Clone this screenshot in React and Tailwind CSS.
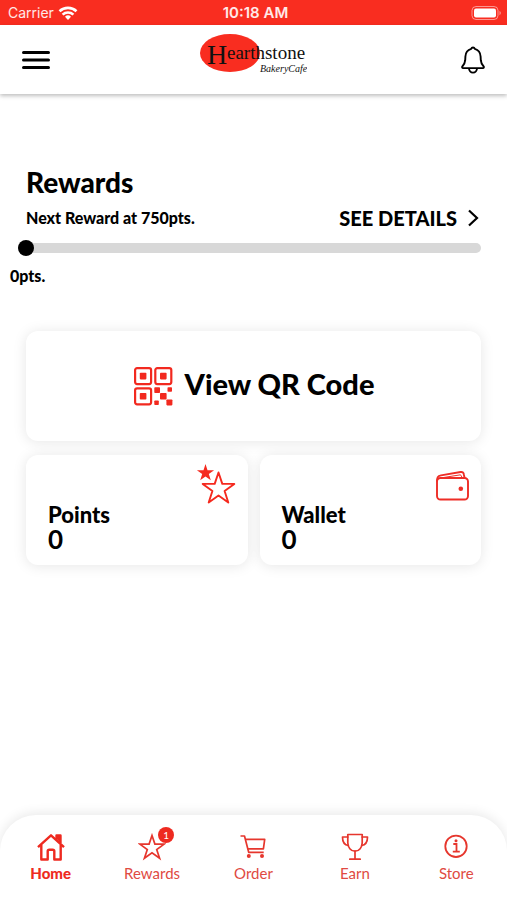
import React, { useState } from 'react';
import clsx from 'clsx';

const WifiIcon = () => (
  <svg className="w-5 h-4" viewBox="0 0 20 16" fill="none" stroke="#fff" strokeWidth="2.6" aria-hidden="true">
    <path d="M1.5 6.2a12.5 12.5 0 0 1 17 0" />
    <path d="M4.6 9.6a8 8 0 0 1 10.8 0" />
    <path d="M10 15l-3-3.2a4.3 4.3 0 0 1 6 0z" fill="#fff" stroke="none" />
  </svg>
);

const BatteryIcon = () => (
  <svg className="w-8 h-4" viewBox="0 0 32 16" fill="none" aria-hidden="true">
    <rect x="1" y="1.5" width="26" height="13" rx="4" stroke="#fff" strokeOpacity="0.5" />
    <rect x="3" y="3.5" width="22" height="9" rx="2" fill="#fff" />
    <path d="M28.5 6v4.2a2.3 2.3 0 0 0 0-4.2z" fill="#fff" fillOpacity="0.5" />
  </svg>
);

const MenuIcon = () => (
  <svg className="w-7 h-5" viewBox="0 0 28 20" fill="none" stroke="#000" strokeWidth="3" strokeLinecap="round" aria-hidden="true">
    <path d="M1.5 2.5h25M1.5 10h25M1.5 17.500h25" />
  </svg>
);

const BellIcon = () => (
  <svg className="w-6 h-7" viewBox="0 0 24 28" fill="none" stroke="#000" strokeWidth="1.9" strokeLinejoin="round" aria-hidden="true">
    <path d="M10.2 2.800a1.900 1.900 0 0 1 3.600 0C17.600 3.800 19.400 6.800 19.600 10.500l.2 3.700c.2 2.500.8 4.200 2.700 6 .7.700.4 1.900-.7 1.900H2.200c-1.100 0-1.400-1.200-.7-1.900 1.900-1.800 2.500-3.500 2.700-6l.2-3.700C4.600 6.800 6.400 3.800 10.200 2.800z" />
    <path d="M8 22.300a4 4.300 0 0 0 8 0" />
  </svg>
);

const Logo = () => (
  <svg className="w-27 h-12" viewBox="0 0 108 48" role="img" aria-label="Hearthstone Bakery Cafe">
    <ellipse cx="31" cy="19" rx="30" ry="19" fill="#f92d20" />
    <g fill="#111" fontFamily="'Liberation Serif', serif">
      <text x="8" y="30" fontSize="28">H</text>
      <text x="28" y="25" fontSize="19">earthstone</text>
      <text x="61" y="38" fontSize="10" fontStyle="italic">BakeryCafe</text>
    </g>
  </svg>
);

const QrIcon = () => (
  <svg className="w-10 h-10" viewBox="0 0 40 40" fill="none" stroke="#f2291f" strokeWidth="2.2" aria-hidden="true">
    <rect x="2.1" y="2.1" width="16" height="16" rx="2" />
    <rect x="22.3" y="2.1" width="16" height="16" rx="2" />
    <rect x="2.1" y="22.3" width="16" height="16" rx="2" />
    <g fill="#f2291f" stroke="none">
      <rect x="6.8" y="6.8" width="6.6" height="6.6" rx="0.8" />
      <rect x="27" y="6.8" width="6.6" height="6.6" rx="0.8" />
      <rect x="6.8" y="27" width="6.6" height="6.6" rx="0.8" />
      <rect x="27" y="27" width="6.6" height="6.6" rx="0.8" />
      <rect x="21.3" y="21.3" width="5.7" height="5.7" rx="0.8" />
      <rect x="34.5" y="21.3" width="4.5" height="4.5" rx="0.8" />
      <rect x="21.3" y="34.5" width="4.5" height="4.5" rx="0.8" />
      <rect x="33.4" y="33.4" width="6" height="6" rx="0.8" />
    </g>
  </svg>
);

const StarsIcon = () => (
  <svg className="w-10 h-11" viewBox="0 0 40 44" fill="none" aria-hidden="true">
    <path d="M9.500 1l2 6.200h6.600l-5.300 3.900 2 6.200-5.300-3.800-5.300 3.800 2-6.200L.9 7.200h6.600z" fill="#f5291e" />
    <path d="M22.500 9.500l3.800 11.400h12l-9.700 7.100 3.700 11.500-9.800-7-9.800 7L16.400 28l-9.700-7.100h12z" stroke="#f5291e" strokeWidth="1.900" strokeLinejoin="round" />
  </svg>
);

const WalletIcon = () => (
  <svg className="w-10 h-11" viewBox="0 0 40 44" fill="none" stroke="#ee2d26" strokeWidth="1.9" strokeLinejoin="round" aria-hidden="true">
    <rect x="8" y="15" width="31" height="21.5" rx="3.5" />
    <path d="M8 18.500c0-4 .6-5.500 4-6.100L31.500 9c2-.3 3 .5 3.300 2.200l.8 3.800" />
    <path d="M11.500 15l20-3.200 2 3.200" strokeWidth="1" />
    <circle cx="31.800" cy="25.800" r="2.300" fill="#ee2d26" stroke="none" />
  </svg>
);

const HomeIcon = () => (
  <svg className="w-7 h-7" viewBox="0 0 28 28" fill="none" stroke="#ee2a20" strokeWidth="2.4" strokeLinejoin="round" aria-hidden="true">
    <path d="M1 14.200L14 2.300l13 11.900" />
    <path d="M19.500 6V2.500h4V10" fill="#ee2a20" />
    <path d="M4.300 12v14.500h6.400v-8.200c0-1 .6-1.600 1.600-1.600h3.400c1 0 1.600.6 1.600 1.600v8.200h6.400V12" />
  </svg>
);

const StarIcon = () => (
  <svg className="w-7 h-7" viewBox="0 0 28 28" fill="none" stroke="#e6362d" strokeWidth="1.7" aria-hidden="true">
    <path d="M14 2.500l2.900 8.600h9.300l-7.500 5.400 2.900 8.800-7.600-5.400-7.600 5.400 2.900-8.800-7.500-5.400h9.300z" />
  </svg>
);

const CartIcon = () => (
  <svg className="w-7 h-7" viewBox="0 0 28 28" fill="none" stroke="#e6362d" strokeWidth="1.7" strokeLinejoin="round" aria-hidden="true">
    <path d="M1.500 3h4L9.700 19.300h15" />
    <path d="M6.300 6.300h19.400L24.400 15.800H8.800" />
    <circle cx="9.800" cy="23" r="2" fill="#e6362d" stroke="none" />
    <circle cx="23" cy="23" r="2" fill="#e6362d" stroke="none" />
  </svg>
);

const TrophyIcon = () => (
  <svg className="w-7 h-7" viewBox="0 0 28 28" fill="none" stroke="#e6362d" strokeWidth="1.7" strokeLinecap="round" strokeLinejoin="round" aria-hidden="true">
    <path d="M6.800 1.500h14.400v8.300c0 4.600-3 8.400-7.200 8.400s-7.200-3.800-7.200-8.400z" />
    <path d="M6.800 4H1.500c0 5 1.700 8 5.900 8.500M21.200 4h5.300c0 5-1.700 8-5.900 8.500" />
    <path d="M14 18.200v8M8.800 26.200h10.400" />
  </svg>
);

const InfoIcon = () => (
  <svg className="w-7 h-7" viewBox="0 0 28 28" fill="none" stroke="#e6362d" strokeWidth="1.8" aria-hidden="true">
    <circle cx="14" cy="13.300" r="10.700" />
    <path d="M11.300 11h3.200v7.600M10.800 18.600h7" />
    <circle cx="14" cy="7.700" r="1.500" fill="#e6362d" stroke="none" />
  </svg>
);

const tabs = [
  { id: 'home', label: 'Home', Icon: HomeIcon },
  { id: 'rewards', label: 'Rewards', Icon: StarIcon, badge: 1 },
  { id: 'order', label: 'Order', Icon: CartIcon },
  { id: 'earn', label: 'Earn', Icon: TrophyIcon },
  { id: 'store', label: 'Store', Icon: InfoIcon }
];

const StatCard = ({ label, value, icon }) => (
  <button className="flex items-start justify-between h-[110px] rounded-xl bg-white pl-[22px] pr-3 text-left shadow-[0_1px_14px_rgba(0,0,0,0.1)]">
    <span className="flex flex-col pt-12">
      <span className="text-[22px] leading-6 font-black">{label}</span>
      <span className="text-[26px] leading-6 font-bold">{value}</span>
    </span>
    <span className="pt-2">{icon}</span>
  </button>
);

const BottomNav = ({ activeTab, onTabChange }) => (
  <nav className="grid grid-cols-5 h-[85px] rounded-t-[36px] bg-white pt-4 shadow-[0_-2px_12px_rgba(0,0,0,0.09)]">
    {tabs.map(({ id, label, Icon, badge }) => (
      <button key={id} onClick={() => onTabChange(id)} className="flex flex-col items-center justify-start gap-0.5">
        <span className="relative pt-0.5">
          <Icon />
          {badge && (
            <span className="absolute -top-1 -right-2 flex items-center justify-center w-4 h-4 rounded-full bg-[#ee2a20] text-[10px] leading-4 text-white">
              {badge}
            </span>
          )}
        </span>
        <span
          className={clsx(
            'text-[15px] leading-5',
            activeTab === id ? 'font-black text-[#ee2a20]' : 'text-[#e04a42]'
          )}
        >
          {label}
        </span>
      </button>
    ))}
  </nav>
);

const App = () => {
  const [activeTab, setActiveTab] = useState('home');
  const [points, setPoints] = useState(0);

  return (
    <div className="flex flex-col min-h-screen bg-white text-black font-['Lato',sans-serif]">
      {/* Status bar */}
      <div className="grid grid-cols-3 items-center h-[25px] pl-2 pr-1 bg-[#f92d20] text-sm text-white/90 font-['Inter',sans-serif]">
        <span className="flex items-center gap-1">
          Carrier <WifiIcon />
        </span>
        <span className="text-center text-[15px] font-semibold">10:18 AM</span>
        <span className="flex justify-end">
          <BatteryIcon />
        </span>
      </div>

      {/* Header */}
      <header className="grid grid-cols-3 items-center h-[69px] px-[22px] bg-white shadow-[0_2px_4px_rgba(0,0,0,0.25)]">
        <button aria-label="Menu" className="justify-self-start">
          <MenuIcon />
        </button>
        <span className="justify-self-center pb-1">
          <Logo />
        </span>
        <button aria-label="Notifications" className="justify-self-end">
          <BellIcon />
        </button>
      </header>

      <main className="flex-1 px-[26px] pt-18">
        {/* Rewards progress */}
        <h1 className="text-[28px] leading-8 font-black">Rewards</h1>
        <div className="flex items-center justify-between pt-2">
          <label htmlFor="progress" className="text-base leading-6 font-black">
            Next Reward at 750pts.
          </label>
          <a href="#details" className="flex items-center gap-2 text-xl leading-6 font-black">
            SEE DETAILS
            <svg className="w-4 h-5" viewBox="0 0 16 20" fill="none" stroke="#000" strokeWidth="2.2" aria-hidden="true">
              <path d="M4 2.500l8 7.500-8 7.500" />
            </svg>
          </a>
        </div>
        <div className="-ml-2 pt-2">
          <input
            id="progress"
            type="range"
            min="0"
            max="750"
            value={points}
            onChange={(e) => setPoints(Number(e.target.value))}
            className="block w-full h-5 appearance-none bg-transparent [&::-webkit-slider-runnable-track]:h-[10px] [&::-webkit-slider-runnable-track]:rounded-full [&::-webkit-slider-runnable-track]:bg-[#d8d8d8] [&::-webkit-slider-thumb]:appearance-none [&::-webkit-slider-thumb]:w-4 [&::-webkit-slider-thumb]:h-4 [&::-webkit-slider-thumb]:-mt-[3px] [&::-webkit-slider-thumb]:rounded-full [&::-webkit-slider-thumb]:bg-black"
          />
        </div>
        <p className="-ml-4 pt-2 text-base leading-5 font-black">{points}pts.</p>

        {/* Cards */}
        <div className="flex flex-col gap-[14px] pt-[45px]">
          <button className="flex items-center justify-center gap-3 h-[110px] rounded-xl bg-white text-[29px] leading-8 font-black shadow-[0_1px_14px_rgba(0,0,0,0.1)]">
            <QrIcon />
            <span className="pb-1">View QR Code</span>
          </button>
          <div className="grid grid-cols-2 gap-3">
            <StatCard label="Points" value={0} icon={<StarsIcon />} />
            <StatCard label="Wallet" value={0} icon={<WalletIcon />} />
          </div>
        </div>
      </main>

      <BottomNav activeTab={activeTab} onTabChange={setActiveTab} />
    </div>
  );
};

export default App;
